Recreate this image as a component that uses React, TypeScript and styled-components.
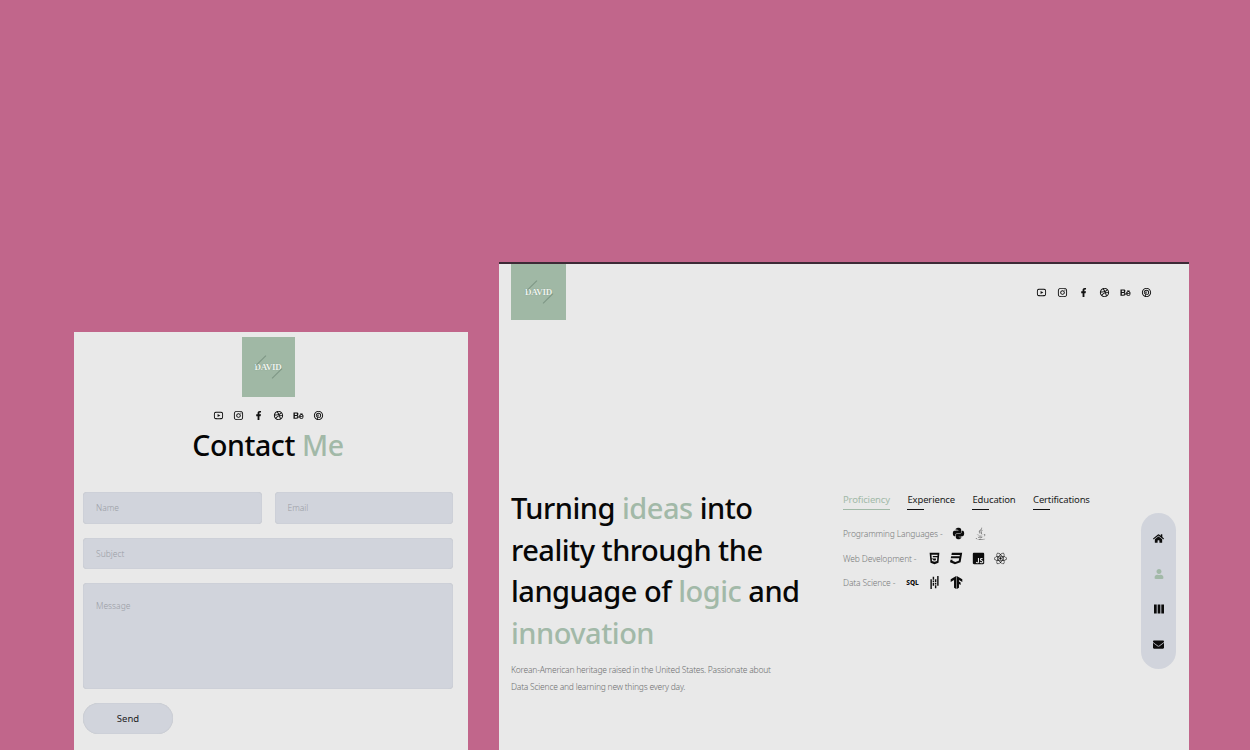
import { ReactNode } from "react";
import { FaCss3, FaEnvelope, FaHome, FaHtml5, FaJava, FaJsSquare, FaPython, FaReact, FaUser } from "react-icons/fa";
import { RiBehanceFill, RiDribbbleLine, RiFacebookFill, RiInstagramLine, RiPinterestLine, RiYoutubeLine } from "react-icons/ri";
import { SiPandas, SiTensorflow } from "react-icons/si";
import styled, { createGlobalStyle } from "styled-components";

const GlobalStyle = createGlobalStyle`
  html, body {
    margin: 0;
    height: 100%;
    overflow: hidden;
    background: #c1668b;
    font-family: "Noto Sans", "Open Sans", sans-serif;
  }
`;

const socials = [RiYoutubeLine, RiInstagramLine, RiFacebookFill, RiDribbbleLine, RiBehanceFill, RiPinterestLine];

const Columns = () => (
  <svg width="10" height="10" viewBox="0 0 10 10" fill="currentColor">
    <rect x="0" y="0.5" width="2.7" height="9" />
    <rect x="3.65" y="0.5" width="2.7" height="9" />
    <rect x="7.3" y="0.5" width="2.7" height="9" />
  </svg>
);

const Logo = ({ w, h }: { w: number; h: number }) => (
  <LogoBox $w={w} $h={h}>
    <LogoSlash $side="left" />
    <LogoName>DAVID</LogoName>
    <LogoSlash $side="right" />
  </LogoBox>
);

const Socials = ({ gap, top }: { gap: number; top: number }) => (
  <SocialRow $gap={gap} $top={top}>
    {socials.map((Icon, i) => (
      <Icon key={i} size={11} />
    ))}
  </SocialRow>
);

const Skill = ({ label, width, children }: { label: string; width: number; children: ReactNode }) => (
  <SkillRow>
    <SkillLabel $w={width}>{label} -</SkillLabel>
    {children}
  </SkillRow>
);

const App = () => (
  <>
    <GlobalStyle />
    <ContactWindow>
      <Logo w={53} h={60} />
      <Socials gap={9} top={13} />
      <ContactTitle>
        Contact <Green>Me</Green>
      </ContactTitle>
      <Form>
        <FieldRow>
          <Field>Name</Field>
          <Field>Email</Field>
        </FieldRow>
        <Field>Subject</Field>
        <MessageField>Message</MessageField>
        <SendButton>Send</SendButton>
      </Form>
    </ContactWindow>

    <HomeWindow>
      <Header>
        <Logo w={55} h={56} />
        <Socials gap={10} top={0} />
      </Header>
      <Hero>
        <Intro>
          <Headline>
            Turning <Green>ideas</Green> into reality through the language of <Green>logic</Green> and{" "}
            <Green>innovation</Green>
          </Headline>
          <Blurb>
            Korean-American heritage raised in the United States. Passionate about
            <br />
            Data Science and learning new things every day.
          </Blurb>
        </Intro>
        <Details>
          <Tabs>
            <Tab $active>Proficiency</Tab>
            <Tab>Experience</Tab>
            <Tab>Education</Tab>
            <Tab>Certifications</Tab>
          </Tabs>
          <Skill label="Programming Languages" width={100}>
            <FaPython size={13} />
            <FaJava size={13} color="#555" />
          </Skill>
          <Skill label="Web Development" width={76}>
            <FaHtml5 size={13} />
            <FaCss3 size={13} />
            <FaJsSquare size={13} />
            <FaReact size={13} />
          </Skill>
          <Skill label="Data Science" width={54}>
            <SqlTag>SQL</SqlTag>
            <SiPandas size={13} />
            <SiTensorflow size={13} />
          </Skill>
        </Details>
        <SideNav>
          <NavIcon>
            <FaHome size={11} />
          </NavIcon>
          <NavIcon $active>
            <FaUser size={10} />
          </NavIcon>
          <NavIcon>
            <Columns />
          </NavIcon>
          <NavIcon>
            <FaEnvelope size={11} />
          </NavIcon>
        </SideNav>
      </Hero>
    </HomeWindow>
  </>
);

export default App;

const Green = styled.span`
  color: #a2b9a8;
`;

const ContactWindow = styled.section`
  position: absolute;
  left: 74px;
  top: 332px;
  width: 394px;
  height: 418px;
  box-sizing: border-box;
  padding: 5px 15px 0 9px;
  background: #e9e9e9;
  display: flex;
  flex-direction: column;
  align-items: center;
`;

const HomeWindow = styled.section`
  position: absolute;
  left: 499px;
  top: 262px;
  width: 690px;
  height: 488px;
  background: #e9e9e9;
  border-top: 2px solid #3d2a36;
  box-sizing: border-box;
`;

const LogoBox = styled.div<{ $w: number; $h: number }>`
  position: relative;
  width: ${(p) => p.$w}px;
  height: ${(p) => p.$h}px;
  flex-shrink: 0;
  background: #a0b8a5;
  display: flex;
  align-items: center;
  justify-content: center;
`;

const LogoName = styled.span`
  font-family: "Liberation Serif", serif;
  font-size: 9px;
  font-weight: 700;
  letter-spacing: -0.3px;
  color: #eef3ee;
  text-shadow: 0 0 1px #6f8a76;
`;

const LogoSlash = styled.i<{ $side: "left" | "right" }>`
  position: absolute;
  top: 50%;
  left: 50%;
  width: 14px;
  height: 1px;
  background: #7d9684;
  transform: rotate(-45deg);
  ${(p) => (p.$side === "left" ? "margin: -7px 0 0 -14px;" : "margin: 6px 0 0 2px;")}
`;

const SocialRow = styled.div<{ $gap: number; $top: number }>`
  display: flex;
  align-items: center;
  gap: ${(p) => p.$gap}px;
  margin-top: ${(p) => p.$top}px;
  color: #111;
`;

const ContactTitle = styled.h1`
  margin: 3px 0 0;
  font-size: 28.5px;
  line-height: 42px;
  font-weight: 500;
  letter-spacing: -0.4px;
  color: #050505;
`;

const Form = styled.div`
  align-self: stretch;
  display: flex;
  flex-direction: column;
  gap: 14px;
  margin-top: 26px;
`;

const FieldRow = styled.div`
  display: grid;
  grid-template-columns: 1fr 1fr;
  gap: 13px;
`;

const Field = styled.div`
  height: 31.5px;
  box-sizing: border-box;
  padding: 0 13px;
  display: flex;
  align-items: center;
  border-radius: 4px;
  background: #d1d4dc;
  box-shadow: inset 0 0 1px #a9adb5;
  color: #9a9da5;
  font-size: 8.5px;
  font-weight: 300;
`;

const MessageField = styled(Field)`
  height: 106px;
  align-items: flex-start;
  padding-top: 17px;
`;

const SendButton = styled.button`
  width: 90px;
  height: 31px;
  border: 0;
  border-radius: 16px;
  background: #d1d4dc;
  box-shadow: inset 0 0 1px #a9adb5;
  color: #222;
  font-family: inherit;
  font-size: 9.5px;
`;

const Header = styled.header`
  display: flex;
  align-items: center;
  justify-content: space-between;
  padding: 0 37px 0 12px;
`;

const Hero = styled.div`
  display: flex;
  align-items: flex-start;
  padding: 167px 13px 0 12px;
`;

const Intro = styled.div`
  width: 332px;
  flex-shrink: 0;
`;

const Headline = styled.h2`
  margin: 0;
  width: 300px;
  font-size: 29px;
  line-height: 41.5px;
  font-weight: 500;
  letter-spacing: -0.5px;
  color: #070707;
`;

const Blurb = styled.p`
  margin: 8px 0 0;
  font-size: 8.5px;
  line-height: 17px;
  font-weight: 300;
  letter-spacing: -0.23px;
  color: #6d6f70;
`;

const Details = styled.div`
  flex: 1;
  display: flex;
  flex-direction: column;
  gap: 8.5px;
  margin-top: 4px;
`;

const Tabs = styled.div`
  display: flex;
  gap: 17.5px;
  margin-bottom: 8px;
`;

const Tab = styled.span<{ $active?: boolean }>`
  position: relative;
  padding-bottom: 1px;
  font-size: 9.5px;
  line-height: 17px;
  letter-spacing: -0.15px;
  color: ${(p) => (p.$active ? "#a2b9a8" : "#1b1b1b")};

  &::after {
    content: "";
    position: absolute;
    left: 0;
    bottom: -1px;
    height: 1px;
    width: ${(p) => (p.$active ? "100%" : "17px")};
    background: ${(p) => (p.$active ? "#a2b9a8" : "#111")};
  }
`;

const SkillRow = styled.div`
  display: flex;
  align-items: center;
  gap: 9px;
  height: 16px;
  color: #0c0c0c;
`;

const SkillLabel = styled.span<{ $w: number }>`
  width: ${(p) => p.$w}px;
  white-space: nowrap;
  font-size: 8.5px;
  font-weight: 300;
  letter-spacing: -0.15px;
  color: #77797a;
`;

const SqlTag = styled.span`
  width: 13px;
  text-align: center;
  font-size: 6.5px;
  font-weight: 800;
`;

const SideNav = styled.nav`
  width: 35px;
  height: 156px;
  margin-top: 26px;
  flex-shrink: 0;
  border-radius: 18px;
  background: #d1d4dc;
  display: flex;
  flex-direction: column;
  align-items: center;
  justify-content: space-around;
  padding: 7px 0;
  box-sizing: border-box;
`;

const NavIcon = styled.span<{ $active?: boolean }>`
  display: flex;
  color: ${(p) => (p.$active ? "#a2b9a8" : "#0c0c0c")};
`;
